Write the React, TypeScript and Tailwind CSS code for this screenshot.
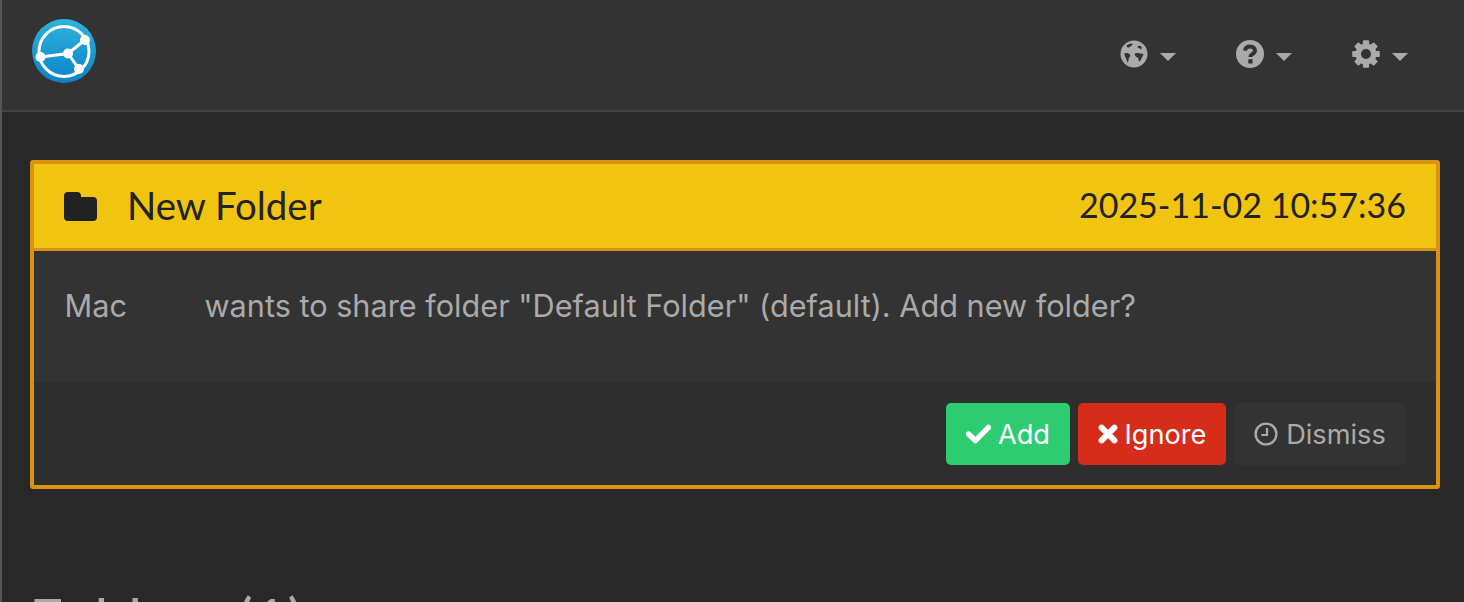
function Logo() {
  return (
    <svg width="64" height="64" viewBox="0 0 64 64">
      <defs>
        <linearGradient id="g" x1="0" y1="0" x2="0" y2="1">
          <stop offset="0" stopColor="#2fb3dd" />
          <stop offset="1" stopColor="#0b82c6" />
        </linearGradient>
      </defs>
      <circle cx="32" cy="32" r="32" fill="url(#g)" />
      <g stroke="#fff" strokeWidth="3" fill="none">
        <circle cx="32" cy="32.5" r="25" />
        <path d="M8.5 38 L36 34.5 L53 21 M36 34.5 L47 50" />
      </g>
      <g fill="#fff">
        <circle cx="8.5" cy="38" r="5" />
        <circle cx="36" cy="34.5" r="5" />
        <circle cx="53" cy="21" r="5" />
        <circle cx="47" cy="50" r="5" />
      </g>
    </svg>
  );
}

function Caret() {
  return <span className="ml-[12px] mt-[6px] block h-0 w-0 border-x-[8px] border-t-[8px] border-x-transparent border-t-[#aaaaaa]" />;
}

function Globe() {
  return (
    <svg width="28" height="28" viewBox="0 0 28 28">
      <circle cx="14" cy="14" r="13.5" fill="#aaaaaa" />
      <g fill="#333333">
        <path d="M6.4 5.6 C8 4.4 10 3.6 12 3.6 C13 4 12.6 5 11.6 5.4 C10.8 6.6 9.6 6.6 8.8 7.6 C7.8 8 6.8 7 6.4 5.6Z" />
        <path d="M4.4 13.4 C6.6 12.6 9 13.4 10.2 14.6 C10.6 16 9.8 17.2 8.8 18.2 C8.6 20.2 8.2 22 7.6 22.6 C6.8 21.2 6.4 19.4 5.8 17.8 C5 16.6 4.4 15 4.4 13.4Z" />
        <path d="M14.6 13.8 C16 12.8 18 13 19.6 13.4 C21.2 13.6 22.8 13.6 23.6 14 C23.2 15.4 22.4 16.4 21.8 17.8 C21.2 19.4 20.4 20.8 19.2 21.8 C18.6 20.6 18.6 19 17.8 17.6 C16.2 17.4 14.8 15.8 14.6 13.8Z" />
        <path d="M17.6 6.2 C18.8 5.2 20.4 5.6 21.4 6.8 C22 7.6 21.8 8.6 21 9.6 C20.2 8.8 19.8 8 18.8 8.2 C18 8 17.6 7.2 17.6 6.2Z" />
      </g>
    </svg>
  );
}

function Question() {
  return (
    <svg width="28" height="28" viewBox="0 0 28 28">
      <circle cx="14" cy="14" r="14" fill="#aaaaaa" />
      <path d="M8.8 10.6 C9.4 7.8 11.6 6.6 14 6.6 C16.8 6.6 19 8.2 19 10.6 C19 12.6 17.6 13.4 16.2 14.2 C15 14.9 14.4 15.4 14.4 17" fill="none" stroke="#333333" strokeWidth="4" />
      <rect x="12.3" y="19.2" width="4.3" height="4.3" fill="#333333" />
    </svg>
  );
}

function Gear() {
  const angles = [0, 45, 90, 135];
  return (
    <svg width="28" height="28" viewBox="0 0 28 28">
      <g fill="#aaaaaa">
        <circle cx="14" cy="14" r="10.6" />
        {angles.map((a) => (
          <rect key={a} x="10.9" y="0.2" width="6.2" height="27.6" rx="1" transform={`rotate(${a} 14 14)`} />
        ))}
      </g>
      <circle cx="14" cy="14" r="5" fill="#333333" />
    </svg>
  );
}

function FolderIcon() {
  return (
    <svg width="33" height="29" viewBox="0 0 33 29" fill="#222222">
      <path d="M4 0h9a4 4 0 0 1 4 4v1h12a4 4 0 0 1 4 4v16a4 4 0 0 1-4 4H4a4 4 0 0 1-4-4V4a4 4 0 0 1 4-4z" />
    </svg>
  );
}

function CheckIcon() {
  return (
    <svg width="25" height="20" viewBox="0 0 25 20">
      <path d="M2.6 10 L9.4 16.6 L22.4 3.4" fill="none" stroke="#ffffff" strokeWidth="5.4" strokeLinejoin="round" strokeLinecap="round" />
    </svg>
  );
}

function XIcon() {
  return (
    <svg width="20" height="20" viewBox="0 0 20 20">
      <path d="M3.6 3.6 L16.4 16.4 M16.4 3.6 L3.6 16.4" fill="none" stroke="#ffffff" strokeWidth="6" strokeLinecap="round" />
    </svg>
  );
}

function ClockIcon() {
  return (
    <svg width="24" height="24" viewBox="0 0 24 24" fill="none" stroke="#aaaaaa">
      <circle cx="12" cy="12" r="10.4" strokeWidth="2.4" />
      <path d="M13 6 V13 H7.4" strokeWidth="2.2" />
    </svg>
  );
}

export default function App() {
  return (
    <div className="h-[602px] w-[1464px] overflow-hidden border-l-2 border-[#555555] bg-[#282828] font-['Inter',sans-serif]">
      <header className="flex h-[112px] items-center justify-between border-b-2 border-[#444444] bg-[#333333] pl-[30px] pr-[56px]">
        <div className="-mt-[8px]">
          <Logo />
        </div>
        <nav className="-mt-[2px] flex items-center gap-[60px] text-[#aaaaaa]">
          <div className="flex items-center">
            <Globe />
            <Caret />
          </div>
          <div className="flex items-center">
            <Question />
            <Caret />
          </div>
          <div className="flex items-center">
            <Gear />
            <Caret />
          </div>
        </nav>
      </header>

      <main className="px-[28px] pt-[48px]">
        <section className="h-[329px] w-[1410px] overflow-hidden rounded-[3px] border-4 border-[#dc9211] bg-[#333333]">
          <div className="flex h-[87px] items-center justify-between border-b-[3px] border-[#dc9211] bg-[#f1c40f] pl-[30px] pr-[30px] text-[#222222]">
            <div className="flex items-center">
              <FolderIcon />
              <span className="-mt-[2px] ml-[30px] font-['Lato',sans-serif] text-[38.4px] leading-none">New Folder</span>
            </div>
            <span className="-mt-[2px] font-['Lato',sans-serif] text-[34px] leading-none">2025-11-02 10:57:36</span>
          </div>
          <div className="flex h-[131px] items-start bg-[#333333] pl-[30.5px] pt-[35px] text-[30.66px] leading-[40px] text-[#aaaaaa]">
            <span className="w-[140px]">Mac</span>
            <span>wants to share folder "Default Folder" (default). Add new folder?</span>
          </div>
          <div className="flex h-[103px] items-start justify-end gap-[8px] bg-[#2e2e2e] pr-[30px] pt-[21px] text-[27.2px]">
            <button className="flex h-[62px] w-[124px] items-center justify-center gap-[7px] rounded-[5px] bg-[#2ecc71] text-white">
              <CheckIcon />
              <span className="mt-[2px]">Add</span>
            </button>
            <button className="flex h-[62px] w-[148px] items-center justify-center gap-[7px] rounded-[5px] bg-[#d62c1a] text-white">
              <XIcon />
              <span className="mt-[2px]">Ignore</span>
            </button>
            <button className="flex h-[62px] w-[172px] items-center justify-center gap-[8px] rounded-[5px] bg-[#333333] text-[#aaaaaa]">
              <ClockIcon />
              <span className="mt-[2px]">Dismiss</span>
            </button>
          </div>
        </section>
        <h2 className="-ml-[1px] mt-[100px] font-['Lato',sans-serif] text-[60px] leading-none text-[#aaaaaa]">Folders (1)</h2>
      </main>
    </div>
  );
}
